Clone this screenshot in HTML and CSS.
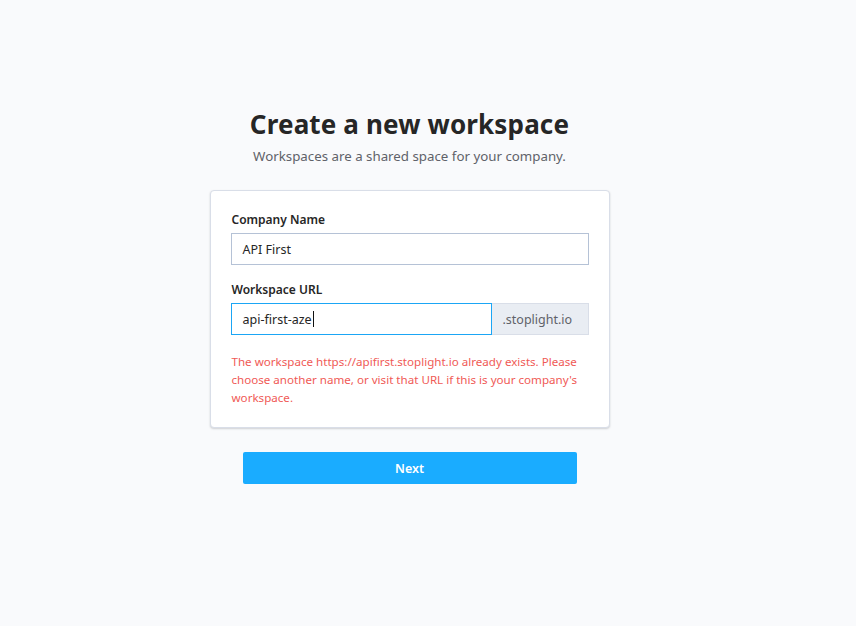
FILE: index.html
```html
<!DOCTYPE html>
<html>
<head>
<meta charset="utf-8">
<link rel="stylesheet" href="styles.css">
</head>
<body>
<main class="page">
  <h1 class="title">Create a new workspace</h1>
  <p class="subtitle">Workspaces are a shared space for your company.</p>
  <section class="card">
    <div class="field">
      <label class="label">Company Name</label>
      <div class="input">API First</div>
    </div>
    <div class="field">
      <label class="label">Workspace URL</label>
      <div class="group">
        <div class="input input-focus">api-first-aze<span class="caret"></span></div>
        <div class="addon">.stoplight.io</div>
      </div>
    </div>
    <p class="error">The workspace https://apifirst.stoplight.io already exists. Please choose another name, or visit that URL if this is your company's workspace.</p>
  </section>
  <button class="next">Next</button>
</main>
</body>
</html>
```
FILE: styles.css
```css
html, body {
  margin: 0;
  padding: 0;
  background: #f9fafc;
  font-family: "Noto Sans", "Open Sans", sans-serif;
}
body {
  padding-right: 37px;
}
.page {
  width: 400px;
  margin: 0 auto;
  padding-top: 106px;
  display: flex;
  flex-direction: column;
  align-items: center;
}
.title {
  margin: 0;
  font-size: 26px;
  line-height: 36px;
  font-weight: 700;
  color: #262626;
  letter-spacing: 0.15px;
}
.subtitle {
  margin: 4px 0 0;
  font-size: 13.3px;
  line-height: 20px;
  color: #5f6269;
}
.card {
  box-sizing: border-box;
  width: 400px;
  margin-top: 24px;
  background: #fff;
  border: 1px solid #d9dee8;
  border-radius: 4px;
  box-shadow: 0 1px 2px rgba(16, 22, 26, 0.18);
  padding: 21px 20px 20px 20px;
}
.field {
  display: flex;
  flex-direction: column;
  margin-bottom: 17px;
}
.label {
  font-size: 12px;
  line-height: 16px;
  font-weight: 600;
  color: #262626;
  margin-bottom: 5px;
  padding-left: 1px;
}
.input {
  box-sizing: border-box;
  height: 32px;
  border: 1px solid #b5c2d6;
  background: #fff;
  font-size: 12.5px;
  color: #262626;
  padding: 0 11px;
  display: flex;
  align-items: center;
}
.group .input {
  flex: 1;
}
.input-focus {
  border-color: #1ba6f5;
}
.caret {
  display: inline-block;
  width: 1px;
  height: 16px;
  background: #111;
  margin-left: 1px;
}
.group {
  display: flex;
}
.addon {
  box-sizing: border-box;
  width: 97px;
  height: 32px;
  background: #e9edf3;
  border: 1px solid #d9dee8;
  border-left: none;
  font-size: 12.5px;
  color: #5f6269;
  display: flex;
  align-items: center;
  padding-left: 11px;
}
.error {
  margin: 18px 0 0;
  padding-left: 1px;
  font-size: 11.6px;
  line-height: 18px;
  color: #f05a56;
}
.next {
  margin-top: 24px;
  width: 334px;
  height: 32px;
  border: none;
  border-radius: 2px;
  background: #1aacff;
  color: #fff;
  font-family: "Noto Sans", "Open Sans", sans-serif;
  font-size: 12.5px;
  font-weight: 600;
  cursor: pointer;
}
```
